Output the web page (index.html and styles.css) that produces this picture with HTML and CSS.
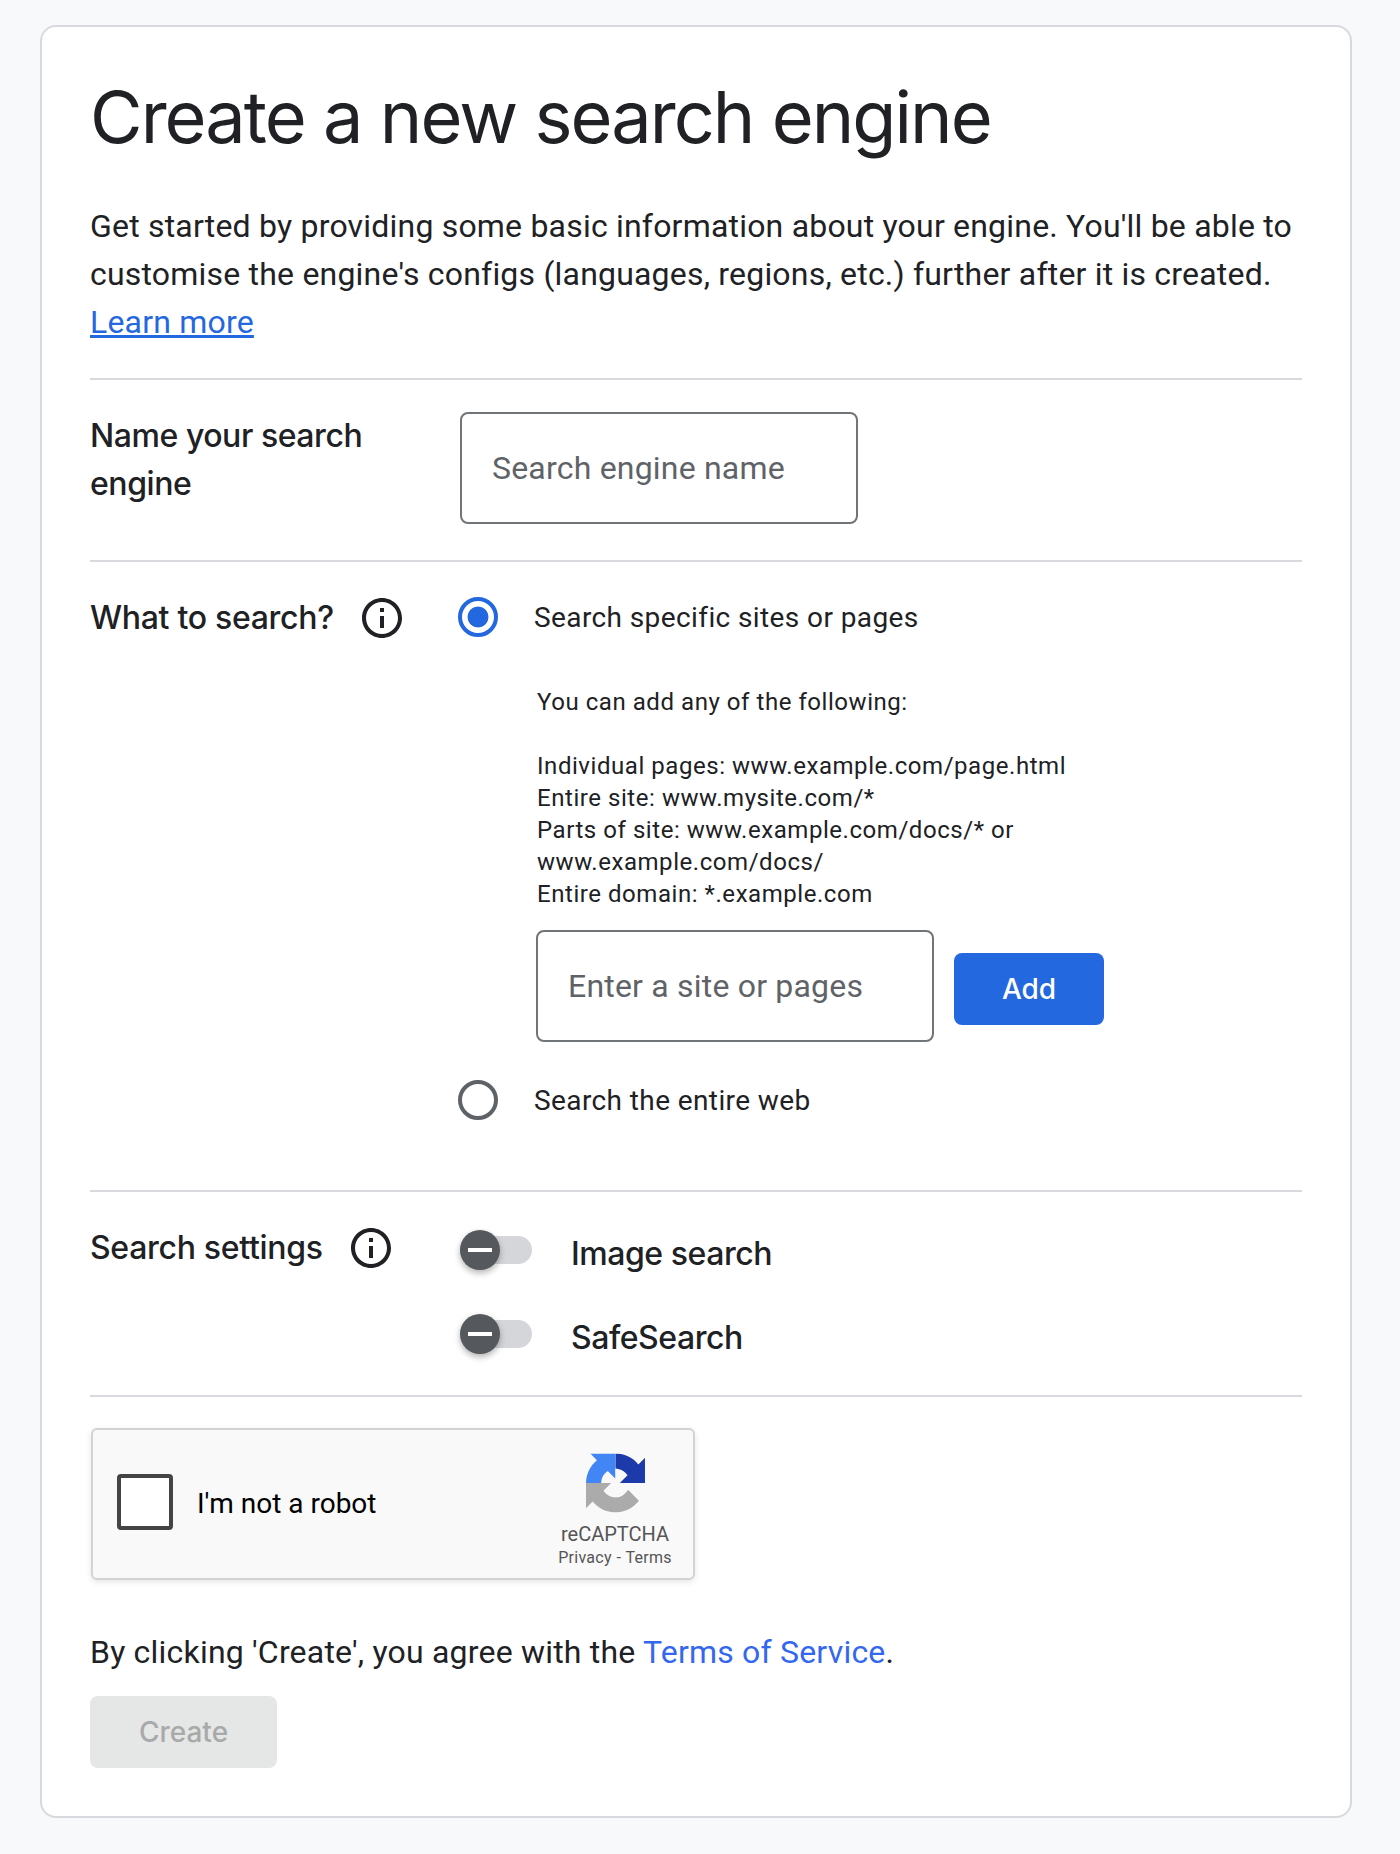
FILE: index.html
```html
<!DOCTYPE html>
<html lang="en">
<head>
<meta charset="utf-8">
<title>Create a new search engine</title>
<link rel="stylesheet" href="styles.css">
</head>
<body>
<main class="card">
  <h1 class="title">Create a new search engine</h1>
  <p class="intro">Get started by providing some basic information about your engine. You'll be able to customise the engine's configs (languages, regions, etc.) further after it is created. <a class="learn" href="#">Learn more</a></p>

  <section class="row row-name">
    <h2 class="label label-name">Name your search engine</h2>
    <input class="field" type="text" placeholder="Search engine name">
  </section>

  <section class="row row-what">
    <div class="label-col">
      <h2 class="label">What to search?</h2>
      <svg class="info" viewBox="0 0 24 24"><path d="M11 7h2v2h-2zm0 4h2v6h-2zm1-9C6.48 2 2 6.48 2 12s4.48 10 10 10 10-4.48 10-10S17.52 2 12 2zm0 18c-4.41 0-8-3.59-8-8s3.59-8 8-8 8 3.59 8 8-3.59 8-8 8z"/></svg>
    </div>
    <div class="options">
      <label class="radio-row"><input class="radio" type="radio" name="what" checked><span>Search specific sites or pages</span></label>
      <p class="hint">You can add any of the following:<br><br>Individual pages: www.example.com/page.html<br>Entire site: www.mysite.com/*<br>Parts of site: www.example.com/docs/* or www.example.com/docs/<br>Entire domain: *.example.com</p>
      <div class="add-row">
        <input class="field" type="text" placeholder="Enter a site or pages">
        <button class="add" type="button">Add</button>
      </div>
      <label class="radio-row radio-row-web"><input class="radio" type="radio" name="what"><span>Search the entire web</span></label>
    </div>
  </section>

  <section class="row row-settings">
    <div class="label-col">
      <h2 class="label">Search settings</h2>
      <svg class="info" viewBox="0 0 24 24"><path d="M11 7h2v2h-2zm0 4h2v6h-2zm1-9C6.48 2 2 6.48 2 12s4.48 10 10 10 10-4.48 10-10S17.52 2 12 2zm0 18c-4.41 0-8-3.59-8-8s3.59-8 8-8 8 3.59 8 8-3.59 8-8 8z"/></svg>
    </div>
    <div class="toggles">
      <div class="toggle-row"><span class="toggle"><span class="knob"></span></span><span class="toggle-label">Image search</span></div>
      <div class="toggle-row"><span class="toggle"><span class="knob"></span></span><span class="toggle-label">SafeSearch</span></div>
    </div>
  </section>

  <div class="bottom">
    <div class="captcha">
      <span class="check"></span>
      <span class="robot">I'm not a robot</span>
      <div class="brand">
        <svg class="logo" viewBox="0 0 64 64">
          <defs>
            <clipPath id="q-blue"><rect x="0" y="0" width="32" height="32"/></clipPath>
            <clipPath id="q-dark"><rect x="32" y="0" width="32" height="32"/></clipPath>
            <clipPath id="q-gray"><rect x="0" y="32" width="64" height="32"/></clipPath>
            <path id="arrow" d="M64 31.955l-.033-1.37V4.687l-7.16 7.16C50.948 4.674 42.033.093 32.05.093c-10.4 0-19.622 4.96-25.458 12.64l11.736 11.86a15.55 15.55 0 0 1 4.754-5.334c2.05-1.6 4.952-2.906 8.968-2.906.485 0 .86.057 1.135.163 4.976.393 9.288 3.14 11.828 7.124l-8.307 8.307 26.295.008"/>
          </defs>
          <g clip-path="url(#q-blue)"><use href="#arrow" fill="#4285f4" transform="rotate(-90 32 32)"/></g>
          <g clip-path="url(#q-dark)"><use href="#arrow" fill="#1c3aa9"/></g>
          <g clip-path="url(#q-gray)"><use href="#arrow" fill="#ababab" transform="rotate(180 32 32)"/></g>
        </svg>
        <span class="brand-name">reCAPTCHA</span>
        <span class="brand-links">Privacy - Terms</span>
      </div>
    </div>
    <p class="tos">By clicking 'Create', you agree with the <a class="tos-link" href="#">Terms of Service</a>.</p>
    <button class="create" type="button" disabled>Create</button>
  </div>
</main>
</body>
</html>
```
FILE: styles.css
```css
* { box-sizing: border-box; }
html, body { margin: 0; padding: 0; }
body {
  background: #f8f9fa;
  color: #202124;
  font-family: Roboto, "Liberation Sans", sans-serif;
  padding: 25px 48px 36px 40px;
}
.card {
  width: 1312px;
  height: 1793px;
  background: #fff;
  border: 2px solid #d8d9de;
  border-radius: 16px;
  padding: 46px 48px 0;
}
.title {
  margin: 0 0 41px;
  font: 400 72px/88px Inter, "Open Sans", sans-serif;
  letter-spacing: -1.95px;
}
.intro {
  margin: 0 0 32px;
  font-size: 32px;
  line-height: 48px;
  letter-spacing: 0.2px;
}
.learn { color: #2468e0; }
.row { border-top: 2px solid #d8d9de; display: flex; }
.row-name { padding: 32px 0 36px; }
.row-what { padding: 32px 0 70px; }
.row-settings { padding: 32px 0 0; height: 205px; }
.label {
  margin: 0;
  font: 500 32px/48px Inter, "Open Sans", sans-serif;
  letter-spacing: -0.3px;
}
.label-name { width: 370px; padding-right: 60px; letter-spacing: -0.45px; }
.label-col { width: 370px; display: flex; align-items: center; align-self: flex-start; gap: 24px; }
.info { width: 48px; height: 48px; fill: #202124; }
.field {
  width: 398px;
  height: 112px;
  border: 2px solid #70757a;
  border-radius: 8px;
  padding: 0 30px;
  background: #fff;
  font-family: Roboto, sans-serif;
  font-size: 32px;
  letter-spacing: 0.2px;
  outline: none;
}
.field::placeholder { color: #5f6368; opacity: 1; }
.options { display: flex; flex-direction: column; padding-top: 3px; }
.radio-row { display: flex; align-items: center; gap: 36px; font-size: 28px; letter-spacing: 0.4px; height: 40px; margin-left: -2px; }
.radio {
  appearance: none;
  margin: 0;
  width: 40px;
  height: 40px;
  border-radius: 50%;
  border: 4px solid #5f6368;
  background: #fff;
  flex: none;
}
.radio:checked {
  border-color: #2468e0;
  background: radial-gradient(circle, #2468e0 0, #2468e0 10px, #fff 10.8px);
}
.hint {
  margin: 49px 0 20px 77px;
  width: 560px;
  font-size: 24px;
  line-height: 32px;
  letter-spacing: 0.55px;
}
.add-row { display: flex; align-items: flex-start; gap: 20px; margin-left: 76px; }
.add {
  margin-top: 23px;
  width: 150px;
  height: 72px;
  border: 0;
  border-radius: 8px;
  background: #2468e0;
  color: #fff;
  font: 500 28px Inter, sans-serif;
}
.radio-row-web { margin-top: 38px; }
.toggles { display: flex; flex-direction: column; gap: 44px; padding-top: 6px; }
.toggle-row { display: flex; align-items: center; height: 40px; gap: 40px; }
.toggle {
  width: 72px;
  height: 28px;
  border-radius: 14px;
  background: #d5d6da;
  display: flex;
  align-items: center;
}
.knob {
  width: 40px;
  height: 40px;
  border-radius: 50%;
  background: #55585d;
  box-shadow: 0 3px 6px rgba(0,0,0,.3);
  display: flex;
  align-items: center;
  justify-content: center;
}
.knob::before { content: ""; width: 24px; height: 4px; background: #fff; }
.toggle-label {
  font: 500 32px/48px Inter, "Open Sans", sans-serif;
  letter-spacing: -0.45px;
  position: relative;
  top: 4px;
  left: -1px;
}
.bottom { border-top: 2px solid #d8d9de; padding-top: 31px; }
.captcha {
  width: 604px;
  height: 152px;
  margin-left: 1px;
  background: #f9f9f9;
  border: 2px solid #d3d3d3;
  border-radius: 6px;
  box-shadow: 0 2px 6px rgba(0,0,0,.1);
  display: flex;
  align-items: center;
  padding: 0 19px 0 24px;
}
.check {
  width: 56px;
  height: 56px;
  flex: none;
  margin-top: -4px;
  background: #fff;
  border: 4px solid #444;
  border-radius: 4px;
}
.robot { font-size: 28px; margin: -2px 0 0 24px; flex: 1; color: #000; }
.brand { width: 118px; margin-top: 14px; display: flex; flex-direction: column; align-items: center; color: #555; }
.logo { width: 59px; height: 60px; }
.brand-name { font-size: 20px; line-height: 24px; margin-top: 9px; }
.brand-links { font-size: 16px; line-height: 24px; letter-spacing: 0.25px; word-spacing: 0.5px; white-space: nowrap; }
.tos { margin: 48px 0 20px; font-size: 32px; line-height: 48px; letter-spacing: 0.2px; }
.tos-link { color: #3367f0; text-decoration: none; }
.create {
  display: block;
  width: 187px;
  height: 72px;
  border: 0;
  border-radius: 8px;
  background: #e5e6e6;
  color: #a8a9a9;
  font: 500 28px Inter, sans-serif;
}
```
